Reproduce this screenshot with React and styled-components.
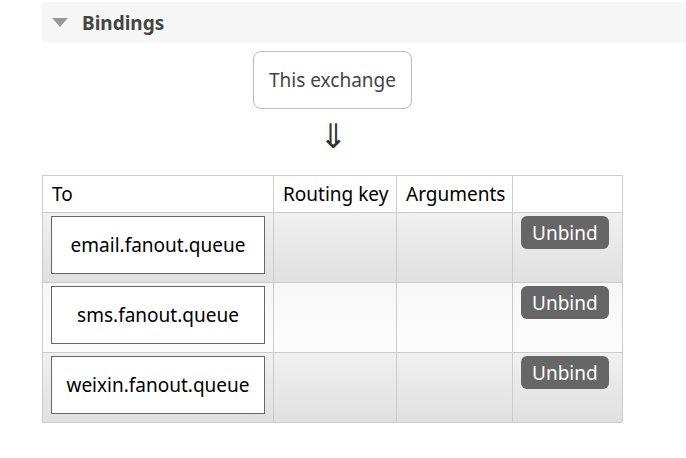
import styled, { createGlobalStyle } from 'styled-components'

const GlobalStyle = createGlobalStyle`
  body {
    margin: 0;
    background: #fff;
    font-family: "Noto Sans", "Open Sans", sans-serif;
    color: #000;
  }
`

const columns = [
  { label: 'To', width: 231 },
  { label: 'Routing key', width: 123 },
  { label: 'Arguments', width: 116 },
  { label: '', width: 110 },
]

const bindings = ['email.fanout.queue', 'sms.fanout.queue', 'weixin.fanout.queue']

export default function App() {
  return (
    <>
      <GlobalStyle />
      <Section>
        <SectionHeader>
          <Caret />
          <Title>Bindings</Title>
        </SectionHeader>
        <Body>
          <Source>This exchange</Source>
          <Arrow>⇓</Arrow>
          <Table>
            <colgroup>
              {columns.map((c, i) => (
                <Col key={i} $w={c.width} />
              ))}
            </colgroup>
            <thead>
              <tr>
                {columns.map((c, i) => (
                  <Th key={i}>{c.label}</Th>
                ))}
              </tr>
            </thead>
            <tbody>
              {bindings.map((name, i) => (
                <Row key={name} $alt={i % 2 === 0}>
                  <Td>
                    <QueueBox>{name}</QueueBox>
                  </Td>
                  <Td />
                  <Td />
                  <Td>
                    <UnbindButton>Unbind</UnbindButton>
                  </Td>
                </Row>
              ))}
            </tbody>
          </Table>
        </Body>
      </Section>
    </>
  )
}

const Section = styled.div`
  padding: 2px 0 0 42px;
`

const SectionHeader = styled.div`
  display: flex;
  align-items: center;
  height: 41px;
  background: #f7f7f7;
  padding-left: 10px;
`

const Caret = styled.span`
  width: 0;
  height: 0;
  border-left: 8px solid transparent;
  border-right: 8px solid transparent;
  border-top: 9px solid #999;
  margin-right: 14px;
`

const Title = styled.h2`
  margin: 0;
  font-size: 19px;
  font-weight: bold;
  color: #444;
`

const Body = styled.div`
  width: 581px;
  display: flex;
  flex-direction: column;
  align-items: center;
  padding-top: 8px;
`

const Source = styled.div`
  width: 157px;
  height: 56px;
  display: flex;
  align-items: center;
  justify-content: center;
  border: 1px solid #bbb;
  border-radius: 8px;
  font-size: 19px;
  color: #444;
`

const Arrow = styled.div`
  height: 66px;
  font-family: "DejaVu Sans", sans-serif;
  font-size: 34px;
  font-weight: 300;
  line-height: 54px;
  color: #333;
`

const Table = styled.table`
  width: 581px;
  table-layout: fixed;
  border-collapse: collapse;
`

const Col = styled.col`
  width: ${({ $w }) => $w}px;
`

const Th = styled.th`
  height: 36px;
  padding: 0 9px;
  border: 1px solid #ccc;
  background: #fff;
  font-size: 19px;
  font-weight: normal;
  text-align: left;
  white-space: nowrap;
`

const Row = styled.tr`
  background: ${({ $alt }) =>
    $alt
      ? 'linear-gradient(#f0f0f0, #e0e0e0)'
      : 'linear-gradient(#f7f7f7, #fdfdfd)'};
`

const Td = styled.td`
  height: 66px;
  padding: 3px 8px 0;
  border: 1px solid #ccc;
  vertical-align: top;
`

const QueueBox = styled.div`
  width: 212px;
  height: 56px;
  display: flex;
  align-items: center;
  justify-content: center;
  border: 1px solid #666;
  background: #fff;
  font-size: 19px;
  color: #000;
`

const UnbindButton = styled.button`
  height: 33px;
  padding: 0 11px;
  border: none;
  border-radius: 6px;
  background: #666;
  color: #fff;
  font-family: inherit;
  font-size: 19px;
  cursor: pointer;
`
